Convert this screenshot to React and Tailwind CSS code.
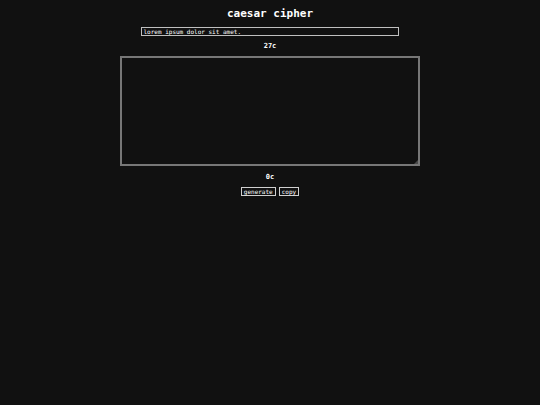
import { useState } from 'react';

const SHIFT = 3;

const encode = (text) =>
  text.replace(/[a-z]/gi, (char) => {
    const base = char <= 'Z' ? 65 : 97;
    return String.fromCharCode(((char.charCodeAt(0) - base + SHIFT) % 26) + base);
  });

export default function App() {
  const [input, setInput] = useState('lorem ipsum dolor sit amet.');
  const [output, setOutput] = useState('');

  return (
    <main className="min-h-screen bg-[#111111] text-white flex flex-col items-center pt-2 font-['DejaVu_Sans_Mono',monospace]">
      <h1 className="text-[11px] leading-3 font-bold">caesar cipher</h1>

      <input
        type="text"
        aria-label="Text to encode"
        value={input}
        onChange={(e) => setInput(e.target.value)}
        className="mt-[7px] w-[47.6%] h-[9px] px-px border border-[#c0c0c0] bg-transparent text-[6px] leading-none outline-none"
      />
      <p className="mt-[6px] text-[7px] leading-[8px] font-bold">{input.length}c</p>

      <div className="relative mt-[6px] w-[55.4%]">
        <textarea
          aria-label="Encoded text"
          readOnly
          value={output}
          className="block w-full h-[110px] p-px border-2 border-[#777777] bg-transparent text-[6px] outline-none resize-none"
        />
        {/* corner grip */}
        <svg className="absolute right-[2px] bottom-[2px] size-1" viewBox="0 0 4 4" aria-hidden="true">
          <path d="M4 0v4H0z" fill="#4a4a4a" />
        </svg>
      </div>
      <p className="mt-[7px] text-[7px] leading-[8px] font-bold">{output.length}c</p>

      <div className="mt-[6px] flex gap-[3px]">
        <button
          type="button"
          onClick={() => setOutput(encode(input))}
          className="h-[9px] px-[2px] border border-[#d0d0d0] text-[6px] leading-none"
        >
          generate
        </button>
        <button
          type="button"
          onClick={() => navigator.clipboard.writeText(output)}
          className="h-[9px] px-[2px] border border-[#d0d0d0] text-[6px] leading-none"
        >
          copy
        </button>
      </div>
    </main>
  );
}
